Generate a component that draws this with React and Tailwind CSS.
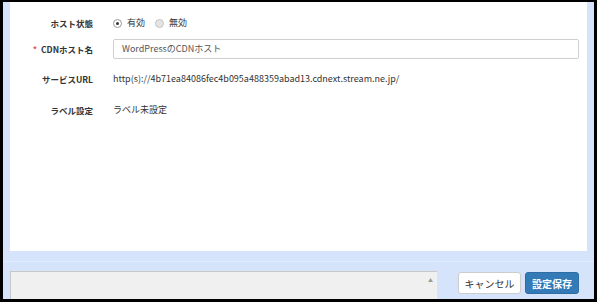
import React from "react";

const jp = { fontFamily: '"Noto Sans CJK JP", "Noto Sans", sans-serif' };

function Radio({ checked }) {
  return (
    <span
      className={`inline-flex h-[9px] w-[9px] items-center justify-center rounded-full border ${
        checked ? "border-[#9a9a9a] bg-white" : "border-[#c4c4c4] bg-[#e4e4e4]"
      }`}
    >
      {checked && <span className="h-[3px] w-[3px] rounded-full bg-[#333]" />}
    </span>
  );
}

function Row({ label, required, className = "", children }) {
  return (
    <div className={`flex h-[20px] items-center ${className}`}>
      <div className="flex w-[83px] shrink-0 items-center justify-end text-[8.5px] font-bold text-[#333]">
        {required && <span className="mr-[4px] text-[#d9534f]">*</span>}
        {label}
      </div>
      <div className="ml-[20px] flex flex-1 items-center pr-[8px] text-[9px] text-[#333]">
        {children}
      </div>
    </div>
  );
}

export default function App() {
  return (
    <div
      className="flex h-[302px] w-[597px] flex-col border-t-2 border-r-[3px] border-b-[3px] border-l-[3px] border-black bg-[#d5e3fb]"
      style={jp}
    >
      <div className="mx-[7px] flex h-[249px] flex-col bg-white pt-[11px]">
        <Row label="ホスト状態">
          <label className="flex items-center">
            <Radio checked />
            <span className="ml-[5px]">有効</span>
          </label>
          <label className="ml-[10px] flex items-center">
            <Radio />
            <span className="ml-[5px]">無効</span>
          </label>
        </Row>

        <Row label="CDNホスト名" required className="mt-[6px]">
          <div className="flex h-[20px] flex-1 items-center rounded-[2px] border border-[#cfcfcf] px-[8px] text-[#555]">
            WordPressのCDNホスト
          </div>
        </Row>

        <Row label="サービスURL" className="mt-[10px]">
          http(s)://4b71ea84086fec4b095a488359abad13.cdnext.stream.ne.jp/
        </Row>

        <Row label="ラベル設定" className="mt-[11px]">
          ラベル未設定
        </Row>
      </div>

      <div className="mt-[10px] h-px bg-[#e2ebfc]" />

      <div className="mt-[9px] flex flex-1 items-start pl-[7px] pr-[15px]">
        <div className="relative h-full w-[427px] border-t border-l border-[#c8c8c8] bg-[#f0f0f0]">
          <span className="absolute top-[5px] right-[4px] text-[5px] leading-none text-[#9a9a9a]">▲</span>
        </div>
        <div className="ml-auto flex gap-[4px] pt-[1px]">
          <button className="h-[22px] w-[63px] rounded-[3px] border border-[#ccc] bg-white text-[10px] text-[#333]">
            キャンセル
          </button>
          <button className="h-[22px] w-[54px] rounded-[3px] border border-[#2e6da4] bg-[#337ab7] text-[10px] font-bold text-white">
            設定保存
          </button>
        </div>
      </div>
    </div>
  );
}
